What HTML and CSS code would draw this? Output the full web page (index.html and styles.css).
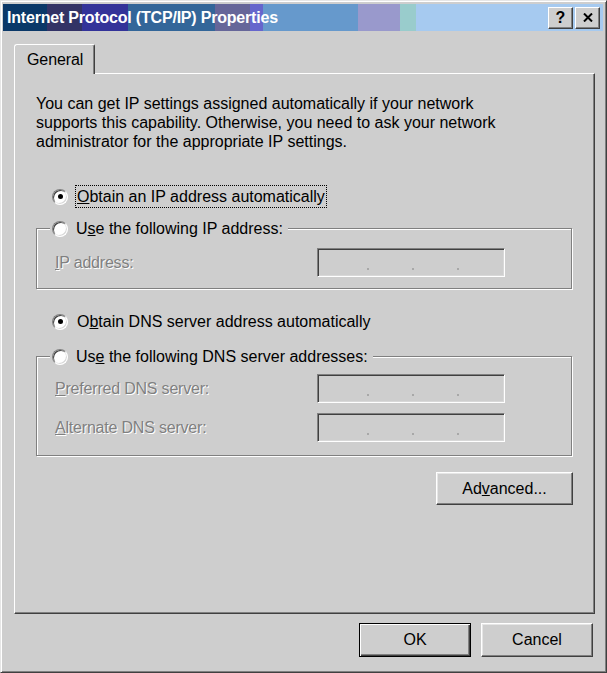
FILE: index.html
```html
<!DOCTYPE html>
<html>
<head>
<meta charset="utf-8">
<title>Internet Protocol (TCP/IP) Properties</title>
<link rel="stylesheet" href="styles.css">
</head>
<body>
<div class="window">
  <div class="titlebar">
    <span class="title">Internet Protocol (TCP/IP) Properties</span>
    <div class="caption-btns">
      <div class="cbtn help">?</div>
      <div class="cbtn close">
        <svg width="10" height="9" viewBox="0 0 10 9"><path d="M1 0.5 L9 8.5 M9 0.5 L1 8.5" stroke="#000" stroke-width="2" fill="none"/></svg>
      </div>
    </div>
  </div>
  <div class="client">
    <div class="tabs"><div class="tab">General</div></div>
    <div class="panel">
      <p class="intro">You can get IP settings assigned automatically if your network supports this capability. Otherwise, you need to ask your network administrator for the appropriate IP settings.</p>

      <div class="radio-row row-ip">
        <span class="radio checked"></span>
        <span class="label focus"><u>O</u>btain an IP address automatically</span>
      </div>

      <div class="group group-ip">
        <div class="legend">
          <span class="radio"></span>
          <span class="label">U<u>s</u>e the following IP address:</span>
        </div>
        <div class="field-row first">
          <span class="dlabel"><u>I</u>P address:</span>
          <span class="ipfield"><i></i><i></i><i></i></span>
        </div>
      </div>

      <div class="radio-row row-dns">
        <span class="radio checked"></span>
        <span class="label">O<u>b</u>tain DNS server address automatically</span>
      </div>

      <div class="group group-dns">
        <div class="legend">
          <span class="radio"></span>
          <span class="label">Us<u>e</u> the following DNS server addresses:</span>
        </div>
        <div class="field-row first">
          <span class="dlabel"><u>P</u>referred DNS server:</span>
          <span class="ipfield"><i></i><i></i><i></i></span>
        </div>
        <div class="field-row second">
          <span class="dlabel"><u>A</u>lternate DNS server:</span>
          <span class="ipfield"><i></i><i></i><i></i></span>
        </div>
      </div>

      <div class="btn advanced">Ad<u>v</u>anced...</div>
    </div>
    <div class="actions">
      <div class="btn default">OK</div>
      <div class="btn">Cancel</div>
    </div>
  </div>
</div>
</body>
</html>
```
FILE: styles.css
```css
html, body {
  margin: 0;
  padding: 0;
  background: #cecece;
}

body {
  font-family: "Liberation Sans", Arial, sans-serif;
  font-size: 16px;
  color: #000;
}

.window {
  width: 607px;
  height: 673px;
  box-sizing: border-box;
  background: #cecece;
  border: 1px solid;
  border-color: #e6e6e6 #404040 #404040 #e6e6e6;
  box-shadow: inset 1px 1px 0 #fff, inset -1px -1px 0 #808080;
  padding: 3px 3px 2px 2px;
  display: flex;
  flex-direction: column;
}

/* Title bar */
.titlebar {
  height: 27px;
  display: flex;
  align-items: center;
  justify-content: space-between;
  padding: 0 3px 0 4px;
  background: linear-gradient(to right,
    #0a3868 0 44px,
    #333366 44px 79px,
    #333399 79px 125px,
    #336699 125px 212px,
    #666699 212px 247px,
    #6666cc 247px 260px,
    #6699cc 260px 355px,
    #9999cc 355px 397px,
    #99cccc 397px 413px,
    #a6caf0 413px);
}

.title {
  color: #fff;
  font-weight: bold;
  font-size: 16px;
  letter-spacing: -0.2px;
  white-space: nowrap;
}

.caption-btns {
  display: flex;
  gap: 2px;
}

.cbtn {
  width: 25px;
  height: 22px;
  box-sizing: border-box;
  background: #cecece;
  border: 1px solid;
  border-color: #fff #404040 #404040 #fff;
  box-shadow: inset -1px -1px 0 #808080;
  display: flex;
  align-items: center;
  justify-content: center;
}

.cbtn.help {
  font-weight: bold;
  font-size: 16px;
  line-height: 1;
}

/* Client area */
.client {
  flex: 1;
  display: flex;
  flex-direction: column;
  padding: 13px 8px 0 11px;
}

.tabs {
  display: flex;
  height: 29px;
  position: relative;
  z-index: 1;
}

.tab {
  height: 30px;
  box-sizing: border-box;
  padding: 0 11px 0 12px;
  display: flex;
  align-items: center;
  background: #cecece;
  border-top: 1px solid #fff;
  border-left: 1px solid #fff;
  border-right: 1px solid #404040;
  box-shadow: inset -1px 0 0 #808080;
  border-top-left-radius: 3px;
  border-top-right-radius: 2px;
  letter-spacing: -0.1px;
}

.panel {
  height: 541px;
  box-sizing: border-box;
  border: 1px solid;
  border-color: #fff #404040 #404040 #fff;
  box-shadow: inset -1px -1px 0 #808080;
  padding: 20px 22px 0 21px;
  display: flex;
  flex-direction: column;
}

.intro {
  margin: 0;
  line-height: 19px;
  max-width: 460px;
}

/* Radios */
.radio-row, .legend {
  display: flex;
  align-items: center;
  height: 23px;
}

.radio-row {
  padding-left: 16px;
}

.row-ip {
  margin-top: 34px;
}

.row-dns {
  margin-top: 21px;
}

.radio {
  width: 16px;
  height: 16px;
  flex: none;
  box-sizing: border-box;
  border-radius: 50%;
  background: #fff;
  border: 1px solid;
  border-color: #808080 #ffffff #ffffff #808080;
  box-shadow: inset 1px 1px 0 #404040, inset -1px -1px 0 #d8d8d8;
  display: flex;
  align-items: center;
  justify-content: center;
}

.radio.checked::after {
  content: "";
  width: 5px;
  height: 5px;
  border-radius: 50%;
  background: #000;
}

.label {
  margin-left: 7px;
  padding: 1px 1px;
  border: 1px solid transparent;
  white-space: nowrap;
  line-height: 19px;
}

.label.focus {
  border: 1px dotted #000;
}

/* Group boxes */
.group {
  border: 1px solid #808080;
  box-shadow: inset 1px 1px 0 #fff, 1px 1px 0 #fff;
  display: flex;
  flex-direction: column;
  align-items: flex-start;
}

.group-ip {
  margin-top: 20px;
  padding-bottom: 11px;
}

.group-dns {
  margin-top: 23px;
  padding-bottom: 13px;
}

.legend {
  margin-top: -12px;
  margin-left: 13px;
  padding: 0 3px 0 2px;
  background: #cecece;
}

.legend .label {
  margin-left: 6px;
}

.field-row {
  display: flex;
  align-items: center;
  padding-left: 18px;
}

.group-ip .field-row.first {
  margin-top: 8px;
}

.group-dns .field-row.first {
  margin-top: 6px;
}

.field-row.second {
  margin-top: 10px;
}

.dlabel {
  width: 262px;
  color: #808080;
  text-shadow: 1px 1px 0 #fff;
  letter-spacing: -0.2px;
}

.ipfield {
  width: 188px;
  height: 29px;
  box-sizing: border-box;
  border: 1px solid;
  border-color: #808080 #fff #fff #808080;
  box-shadow: inset 1px 1px 0 #404040, inset -1px -1px 0 #d8d8d8;
  background: #cecece;
  display: flex;
  align-items: flex-start;
  gap: 43px;
  padding: 19px 0 0 49px;
}

.ipfield i {
  width: 2px;
  height: 2px;
  background: #a8a8a8;
}

/* Buttons */
.btn {
  box-sizing: border-box;
  background: #cecece;
  border: 1px solid;
  border-color: #fff #404040 #404040 #fff;
  box-shadow: inset -1px -1px 0 #808080, inset 1px 1px 0 #e6e6e6;
  display: flex;
  align-items: center;
  justify-content: center;
}

.advanced {
  align-self: flex-end;
  margin-top: 16px;
  margin-right: -1px;
  width: 137px;
  height: 33px;
}

.actions {
  display: flex;
  justify-content: flex-end;
  gap: 10px;
  margin-top: 9px;
  padding-right: 2px;
}

.actions .btn {
  width: 112px;
  height: 34px;
}

.actions .btn.default {
  border: 1px solid #000;
  box-shadow: inset 1px 1px 0 #fff, inset -1px -1px 0 #404040, inset -2px -2px 0 #808080;
}
```
